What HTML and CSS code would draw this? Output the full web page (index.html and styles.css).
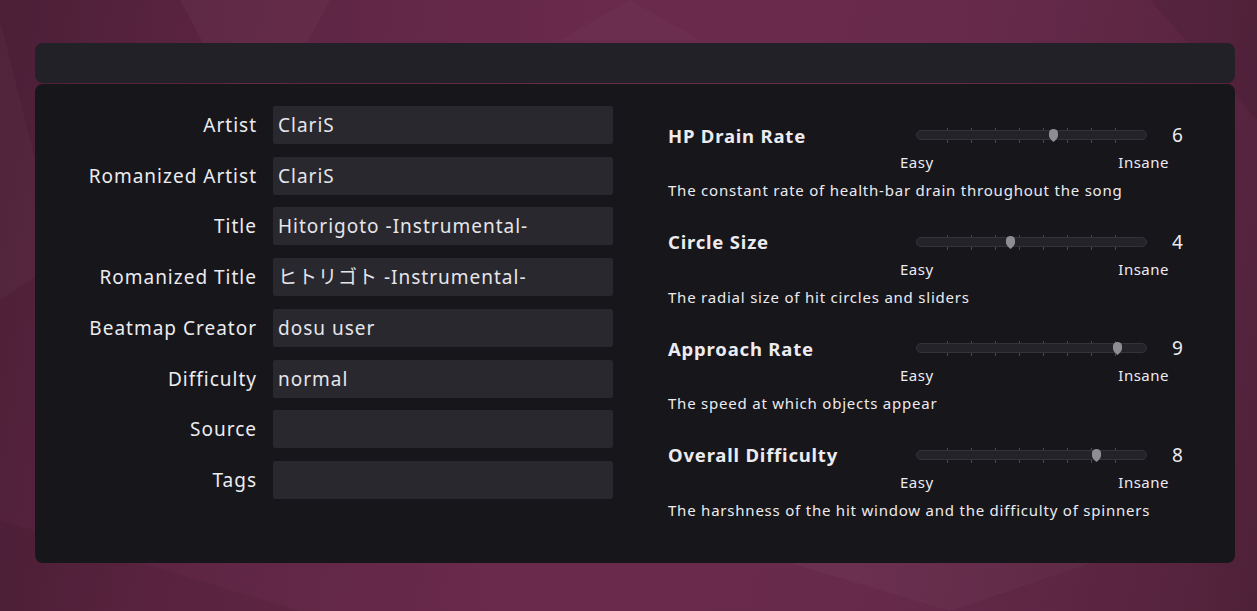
FILE: index.html
```html
<!DOCTYPE html>
<html>
<head>
<meta charset="utf-8">
<link rel="stylesheet" href="styles.css">
</head>
<body>
<svg class="bg-tri" width="1257" height="611" viewBox="0 0 1257 611">
  <polygon points="180,0 330,0 255,140" fill="#ffffff" opacity="0.03"/>
  <polygon points="0,20 60,260 0,300" fill="#ffffff" opacity="0.025"/>
  <polygon points="560,40 700,40 630,0" fill="#ffffff" opacity="0.02"/>
  <polygon points="1150,0 1257,0 1257,120" fill="#000000" opacity="0.07"/>
  <polygon points="0,520 300,611 0,611" fill="#000000" opacity="0.05"/>
  <polygon points="780,560 1100,560 950,611" fill="#ffffff" opacity="0.025"/>
</svg>
<div class="wrap">
  <div class="topbar"></div>
  <div class="panel">
    <div class="form">
      <label class="lbl">Artist</label><div class="inp">ClariS</div>
      <label class="lbl">Romanized Artist</label><div class="inp">ClariS</div>
      <label class="lbl">Title</label><div class="inp">Hitorigoto -Instrumental-</div>
      <label class="lbl">Romanized Title</label><div class="inp">ヒトリゴト -Instrumental-</div>
      <label class="lbl">Beatmap Creator</label><div class="inp">dosu user</div>
      <label class="lbl">Difficulty</label><div class="inp">normal</div>
      <label class="lbl">Source</label><div class="inp"></div>
      <label class="lbl">Tags</label><div class="inp"></div>
    </div>
    <div class="settings">
      <div class="setting">
        <div class="row1">
          <div class="title">HP Drain Rate</div>
          <div class="slider"><div class="ticks"><i></i><i></i><i></i><i></i><i></i><i></i><i></i><i></i></div><div class="track"></div><svg class="thumb" style="left:133px" width="9" height="13" viewBox="0 0 9 13"><path d="M4.5 0C7 0 9 1.3 9 3.8V7C9 9 6.2 11.5 4.5 13C2.8 11.5 0 9 0 7V3.8C0 1.3 2 0 4.5 0Z" fill="#8e8d92"/></svg></div>
          <div class="val">6</div>
        </div>
        <div class="row2"><span>Easy</span><span>Insane</span></div>
        <div class="desc">The constant rate of health-bar drain throughout the song</div>
      </div>
      <div class="setting">
        <div class="row1">
          <div class="title">Circle Size</div>
          <div class="slider"><div class="ticks"><i></i><i></i><i></i><i></i><i></i><i></i><i></i><i></i></div><div class="track"></div><svg class="thumb" style="left:90px" width="9" height="13" viewBox="0 0 9 13"><path d="M4.5 0C7 0 9 1.3 9 3.8V7C9 9 6.2 11.5 4.5 13C2.8 11.5 0 9 0 7V3.8C0 1.3 2 0 4.5 0Z" fill="#8e8d92"/></svg></div>
          <div class="val">4</div>
        </div>
        <div class="row2"><span>Easy</span><span>Insane</span></div>
        <div class="desc">The radial size of hit circles and sliders</div>
      </div>
      <div class="setting">
        <div class="row1">
          <div class="title">Approach Rate</div>
          <div class="slider"><div class="ticks"><i></i><i></i><i></i><i></i><i></i><i></i><i></i><i></i></div><div class="track"></div><svg class="thumb" style="left:197px" width="9" height="13" viewBox="0 0 9 13"><path d="M4.5 0C7 0 9 1.3 9 3.8V7C9 9 6.2 11.5 4.5 13C2.8 11.5 0 9 0 7V3.8C0 1.3 2 0 4.5 0Z" fill="#8e8d92"/></svg></div>
          <div class="val">9</div>
        </div>
        <div class="row2"><span>Easy</span><span>Insane</span></div>
        <div class="desc">The speed at which objects appear</div>
      </div>
      <div class="setting">
        <div class="row1">
          <div class="title">Overall Difficulty</div>
          <div class="slider"><div class="ticks"><i></i><i></i><i></i><i></i><i></i><i></i><i></i><i></i></div><div class="track"></div><svg class="thumb" style="left:176px" width="9" height="13" viewBox="0 0 9 13"><path d="M4.5 0C7 0 9 1.3 9 3.8V7C9 9 6.2 11.5 4.5 13C2.8 11.5 0 9 0 7V3.8C0 1.3 2 0 4.5 0Z" fill="#8e8d92"/></svg></div>
          <div class="val">8</div>
        </div>
        <div class="row2"><span>Easy</span><span>Insane</span></div>
        <div class="desc">The harshness of the hit window and the difficulty of spinners</div>
      </div>
    </div>
  </div>
</div>
</body>
</html>
```
FILE: styles.css
```css
html, body {
  margin: 0;
  padding: 0;
}
body {
  width: 1257px;
  height: 611px;
  overflow: hidden;
  position: relative;
  background: linear-gradient(100deg, #4c1f37 0%, #5e2543 20%, #6a2a4c 45%, #682a4b 70%, #5a2541 90%, #4f2139 100%);
  font-family: "Noto Sans", "Noto Sans CJK JP", sans-serif;
  color: #ecebef;
}
.bg-tri {
  position: absolute;
  left: 0;
  top: 0;
}
.wrap {
  position: relative;
  padding: 43px 22px 0 35px;
  width: 1200px;
}
.topbar {
  height: 40px;
  background: #222127;
  border-radius: 8px;
  margin-bottom: 1px;
}
.panel {
  height: 479px;
  background: #17161b;
  border-radius: 8px;
  display: flex;
  box-sizing: border-box;
}
.form {
  display: grid;
  grid-template-columns: 222px 340px;
  grid-auto-rows: 38px;
  column-gap: 16px;
  row-gap: 12.71px;
  padding-top: 22px;
  align-content: start;
}
.lbl {
  font-size: 19px;
  text-align: right;
  line-height: 38px;
  letter-spacing: 1px;
}
.inp {
  background: #29282f;
  border-radius: 2px;
  font-size: 19px;
  line-height: 38px;
  padding-left: 5px;
  letter-spacing: 1px;
  color: #e6e5ea;
}
.settings {
  margin-left: 55px;
  padding-top: 36px;
}
.setting {
  margin-bottom: 26.67px;
}
.row1 {
  display: flex;
  align-items: center;
  height: 30px;
}
.title {
  width: 248px;
  font-size: 18.5px;
  font-weight: 700;
  letter-spacing: 0.8px;
}
.slider {
  position: relative;
  width: 231px;
  height: 16px;
}
.track {
  position: absolute;
  left: 0;
  right: 0;
  top: 3px;
  height: 8px;
  background: #24232a;
  border: 1px solid #34333a;
  border-radius: 5px;
}
.ticks {
  position: absolute;
  left: 31px;
  top: 1px;
  height: 15px;
  display: flex;
  gap: 23px;
}
.ticks i {
  display: block;
  width: 1px;
  height: 15px;
  background: #4a4950;
}
.thumb {
  position: absolute;
  top: 2px;
}
.val {
  margin-left: 25px;
  font-size: 19px;
}
.row2 {
  display: flex;
  justify-content: space-between;
  width: 269px;
  margin-left: 232px;
  margin-top: 2px;
  height: 20px;
  line-height: 20px;
  font-size: 15px;
  letter-spacing: 0.5px;
}
.desc {
  margin-top: 8px;
  height: 20px;
  line-height: 20px;
  font-size: 15px;
  letter-spacing: 0.78px;
}
```
